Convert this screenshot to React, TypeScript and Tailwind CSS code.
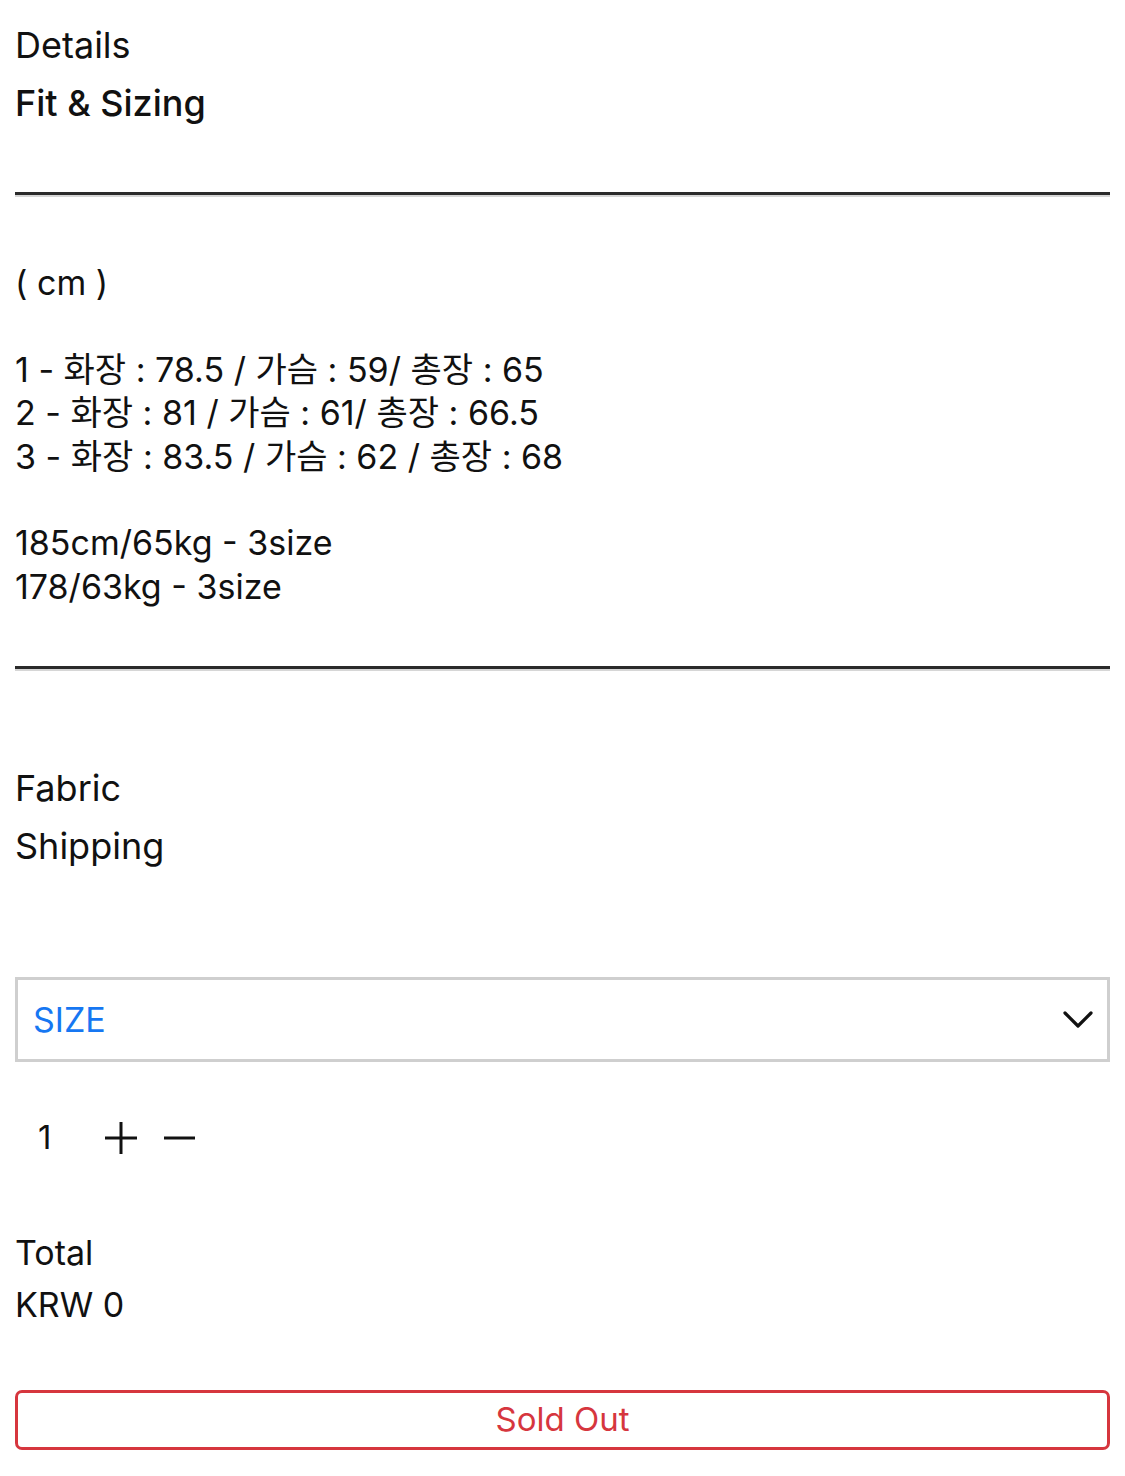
import React from 'react';

const font = { fontFamily: 'Inter, "Noto Sans CJK KR", sans-serif' };

function Rule() {
    return <div className="border-t-[3px] border-t-[#2b2b2b] border-b-[2px] border-b-[#d6d6d6]" />;
}

export default function App() {
    const sizes = [
        '1 - 화장 : 78.5 / 가슴 : 59/ 총장 : 65',
        '2 - 화장 : 81 / 가슴 : 61/ 총장 : 66.5',
        '3 - 화장 : 83.5 / 가슴 : 62 / 총장 : 68',
    ];

    return (
        <div className="min-h-screen bg-white px-[15px] pt-[16px] text-[#111] text-[36px]" style={font}>
            {/* Accordion headers */}
            <div className="leading-[58px]">Details</div>
            <div className="leading-[58px] font-medium">Fit &amp; Sizing</div>

            <div className="mt-[60px]">
                <Rule />
            </div>

            {/* Size chart */}
            <div className="mt-[64px] leading-[43.4px] text-[34px]">
                <div>( cm )</div>
                <div className="h-[43.4px]" />
                {sizes.map((s) => (
                    <div key={s}>{s}</div>
                ))}
                <div className="h-[43.4px]" />
                <div>185cm/65kg - 3size</div>
                <div>178/63kg - 3size</div>
            </div>

            <div className="mt-[58px]">
                <Rule />
            </div>

            <div className="mt-[88px] leading-[58px]">Fabric</div>
            <div className="leading-[58px]">Shipping</div>

            {/* Option select */}
            <div className="mt-[102px] h-[85px] border-[3px] border-[#cfcfcf] flex items-center justify-between pl-[15px] pr-[14px]">
                <span className="text-[#1677f2] text-[34px]">SIZE</span>
                <svg width="30" height="20" viewBox="0 0 30 20" fill="none">
                    <polyline points="2,3 15,16 28,3" stroke="#111" strokeWidth="3.2" strokeLinecap="round" strokeLinejoin="round" />
                </svg>
            </div>

            {/* Quantity */}
            <div className="mt-[50px] h-[52px] flex items-center">
                <span className="ml-[23px] w-[67px] text-[33px]">1</span>
                <svg width="32" height="32" viewBox="0 0 32 32">
                    <line x1="0" y1="16" x2="32" y2="16" stroke="#111" strokeWidth="3" />
                    <line x1="16" y1="0" x2="16" y2="32" stroke="#111" strokeWidth="3" />
                </svg>
                <svg width="31" height="32" viewBox="0 0 31 32" className="ml-[27px]">
                    <line x1="0" y1="16" x2="31" y2="16" stroke="#111" strokeWidth="3" />
                </svg>
            </div>

            {/* Total */}
            <div className="mt-[63px] leading-[52px] text-[34px]">Total</div>
            <div className="leading-[52px] text-[34px]">KRW 0</div>

            <button className="mt-[59px] w-full h-[60px] border-[3px] border-[#d6363e] rounded-[7px] text-[#d6363e] text-[33px] flex items-center justify-center">
                Sold Out
            </button>
        </div>
    );
}
